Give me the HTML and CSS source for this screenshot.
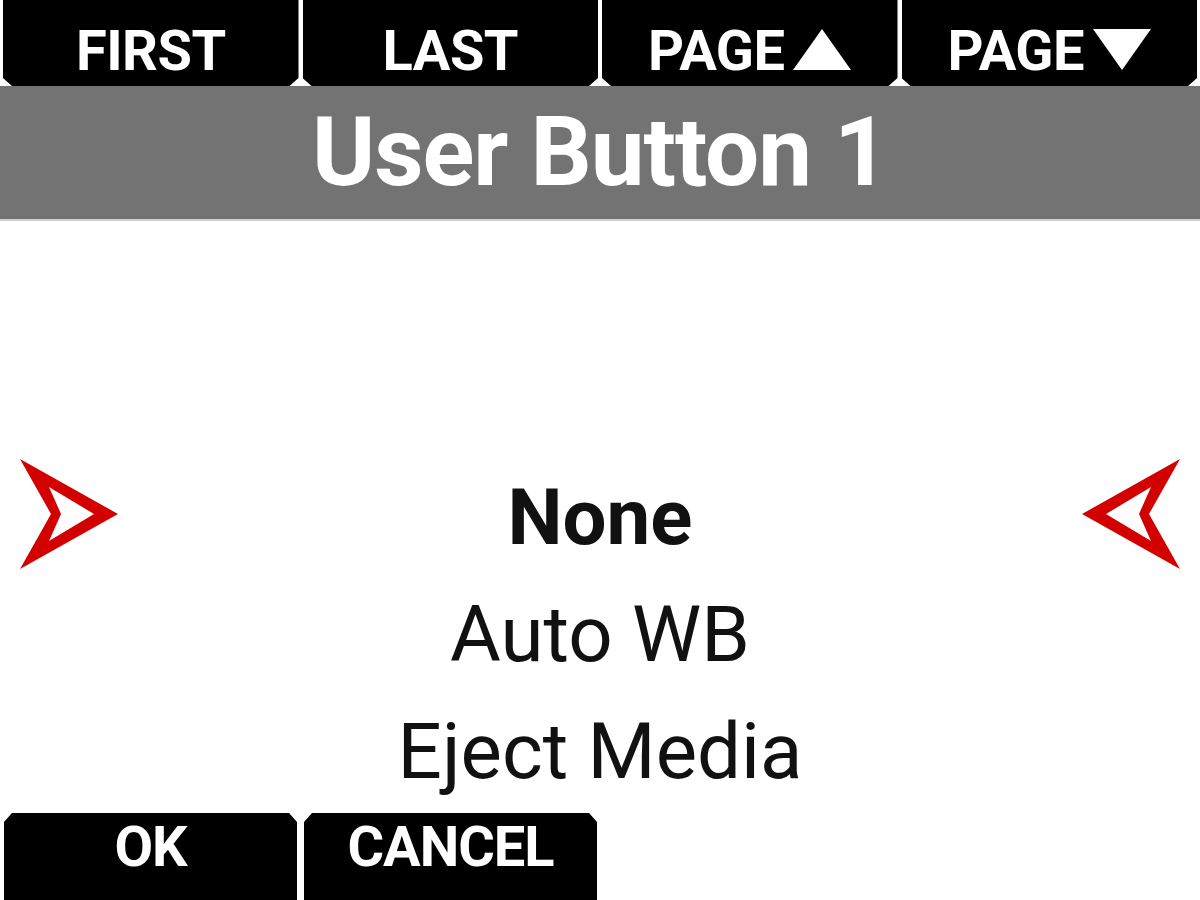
FILE: index.html
```html
<!DOCTYPE html>
<html lang="en">
<head>
    <meta charset="UTF-8">
    <title>User Button 1</title>
    <link rel="stylesheet" href="styles.css">
</head>
<body>
    <div class="screen">
        <div class="tabs">
            <div class="tab">FIRST</div>
            <div class="tab">LAST</div>
            <div class="tab">PAGE<svg class="tri" viewBox="0 0 58 41" width="58" height="41"><polygon points="29,0 58,41 0,41"/></svg></div>
            <div class="tab">PAGE<svg class="tri" viewBox="0 0 58 41" width="58" height="41"><polygon points="0,0 58,0 29,41"/></svg></div>
        </div>

        <div class="title">User Button 1</div>

        <div class="list">
            <div class="row selected">
                <svg class="arrow" viewBox="0 0 120 117" width="120" height="117">
                    <path fill-rule="evenodd" d="M20 0 L118 55 L20 110 L51 55 Z M49 28 L61 55 L49 82 L94 55 Z"/>
                </svg>
                <div class="item">None</div>
                <svg class="arrow flip" viewBox="0 0 120 117" width="120" height="117">
                    <path fill-rule="evenodd" d="M20 0 L118 55 L20 110 L51 55 Z M49 28 L61 55 L49 82 L94 55 Z"/>
                </svg>
            </div>
            <div class="row"><div class="item">Auto WB</div></div>
            <div class="row"><div class="item">Eject Media</div></div>
        </div>

        <div class="softkeys">
            <div class="key">OK</div>
            <div class="key">CANCEL</div>
        </div>
    </div>
</body>
</html>
```

FILE: styles.css
```css
body {
    margin: 0;
    padding: 0;
    background: #fff;
    font-family: Roboto, "Liberation Sans", sans-serif;
}

.screen {
    width: 1200px;
    height: 900px;
    overflow: hidden;
    display: flex;
    flex-direction: column;
}

/* top soft tabs */
.tabs {
    display: flex;
    gap: 4px;
    padding: 0 3px;
    height: 86px;
    background: #fff;
    flex-shrink: 0;
}

.tab {
    flex: 1;
    background: #000;
    color: #fff;
    font-weight: bold;
    font-size: 56px;
    line-height: 56px;
    padding-top: 23px;
    text-align: center;
    letter-spacing: -0.5px;
    clip-path: polygon(0 0, 100% 0, 100% calc(100% - 8px), calc(100% - 9px) 100%, 9px 100%, 0 calc(100% - 8px));
}

.tab .tri {
    fill: #fff;
    margin-left: 9px;
    vertical-align: 0;
}

.title {
    height: 133px;
    background: #737373;
    border-bottom: 2px solid #cfcfcf;
    color: #fff;
    font-weight: bold;
    font-size: 96px;
    line-height: 133px;
    text-align: center;
    letter-spacing: -1px;
    flex-shrink: 0;
}

/* option wheel */
.list {
    height: 592px;
    padding-top: 238px;
    box-sizing: border-box;
    overflow: hidden;
    flex-shrink: 0;
}

.row {
    display: grid;
    grid-template-columns: 120px 1fr 120px;
    height: 117px;
}

.item {
    grid-column: 2;
    text-align: center;
    font-size: 78px;
    line-height: 117px;
    color: #111;
}

.selected .item {
    font-weight: bold;
}

.arrow {
    display: block;
    fill: #d30000;
}

.arrow.flip {
    transform: scaleX(-1);
}

/* bottom soft keys */
.softkeys {
    display: flex;
    gap: 7px;
    padding-left: 4px;
    height: 87px;
    flex-shrink: 0;
}

.key {
    width: 293px;
    background: #000;
    color: #fff;
    font-weight: bold;
    font-size: 56px;
    line-height: 56px;
    padding-top: 6px;
    box-sizing: border-box;
    text-align: center;
    letter-spacing: -1px;
    clip-path: polygon(8px 0, calc(100% - 8px) 0, 100% 9px, 100% 100%, 0 100%, 0 9px);
}
```
